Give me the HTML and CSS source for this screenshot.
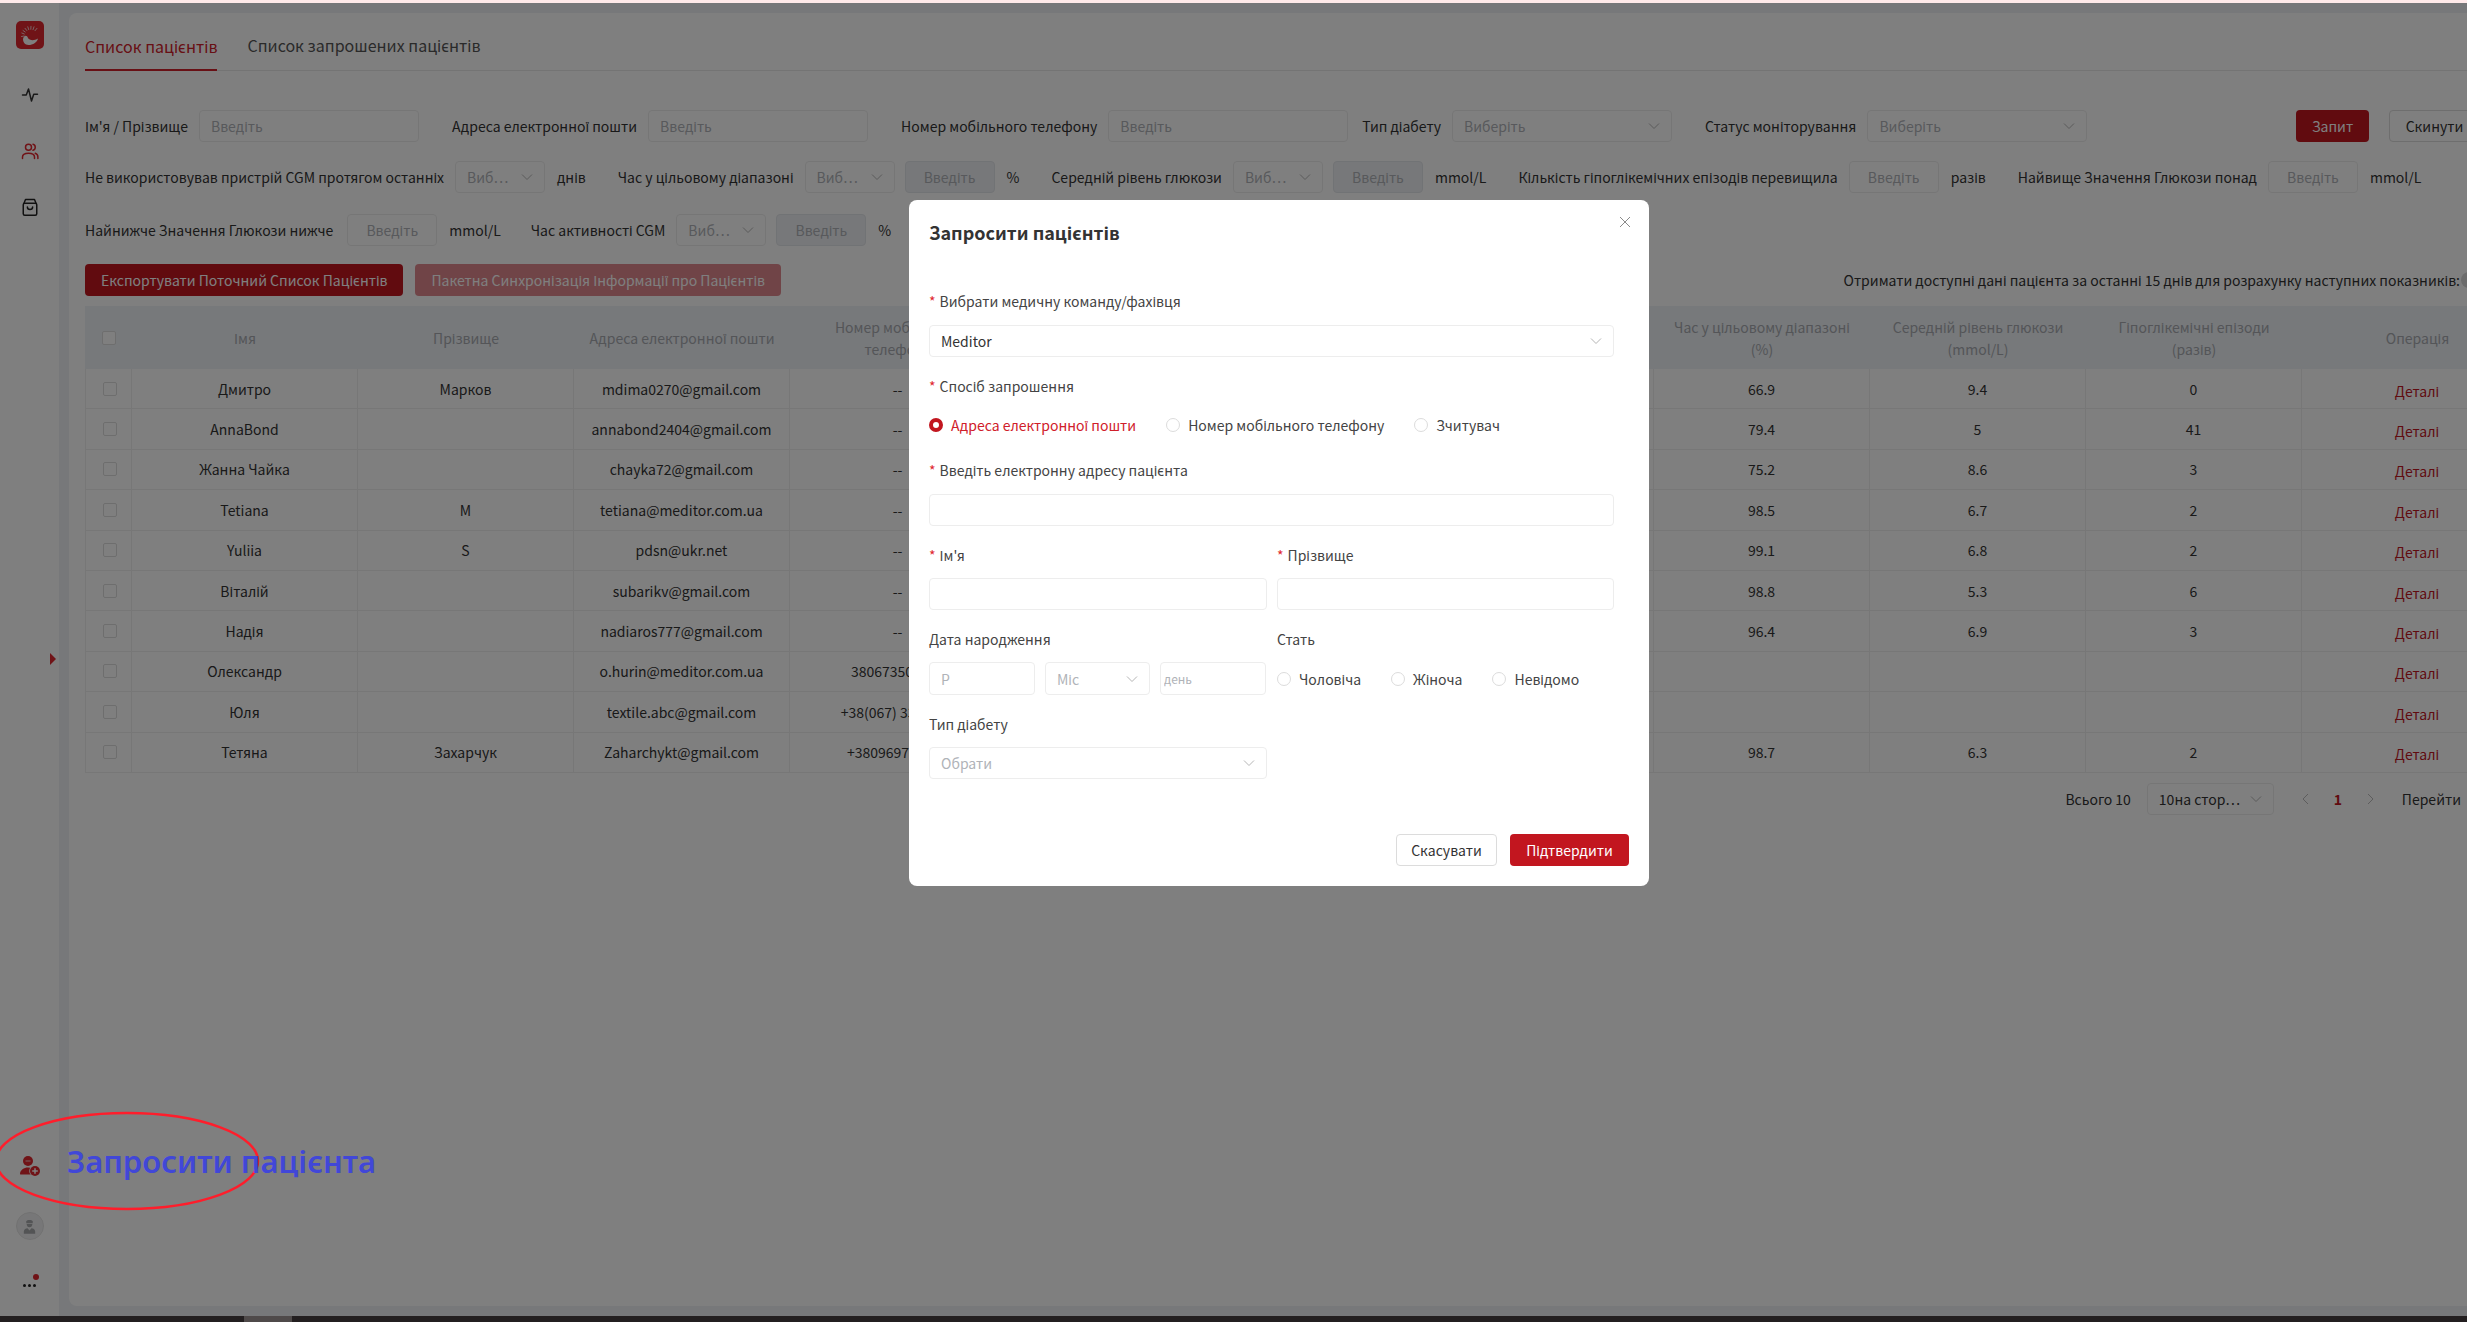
FILE: index.html
```html
<!DOCTYPE html>
<html lang="uk">
<head>
    <meta charset="UTF-8">
    <title>Список пацієнтів</title>
    <link rel="stylesheet" href="styles.css">
</head>
<body>
    <svg class="defs" width="0" height="0">
        <symbol id="chev" viewBox="0 0 12 12"><polyline points="1,3.5 6,8.5 11,3.5" fill="none" stroke="currentColor" stroke-width="1"/></symbol>
    </svg>

    <div class="topline"></div>

    <div class="app">
        <!-- left menu -->
        <div class="sidebar">
            <svg class="logo" viewBox="0 0 28 28">
                <rect width="28" height="28" rx="5" fill="#e0262e"/>
                <g stroke="#f3c9cb" stroke-width="1" stroke-linecap="round">
                    <line x1="8" y1="15" x2="5.500" y2="15.500"/>
                    <line x1="8.300" y1="13" x2="5.800" y2="12"/>
                    <line x1="9.200" y1="11" x2="7" y2="9.500"/>
                    <line x1="10.800" y1="9.500" x2="9" y2="7.300"/>
                    <line x1="12.700" y1="8.600" x2="11.800" y2="5.800"/>
                    <line x1="14.800" y1="8.300" x2="15" y2="5.300"/>
                    <line x1="17" y1="8.700" x2="18" y2="5.800"/>
                    <line x1="19" y1="9.700" x2="21" y2="7.300"/>
                </g>
                <path d="M7 18C8 14 11 14 12 17c1.500 2.500 6 3 10 .5C21 21.500 17 24 12.500 24 9 24 7 21 7 18z" fill="#fff"/>
            </svg>
            <svg class="nav-icon nav-first" viewBox="0 0 24 24" fill="none" stroke="#333" stroke-width="2" stroke-linejoin="round" stroke-linecap="round"><polyline points="2,12 7,12 10,4 14,20 17,11 22,11"/></svg>
            <svg class="nav-icon" viewBox="0 0 24 24" fill="none" stroke="#e0262e" stroke-width="2" stroke-linecap="round"><circle cx="10" cy="7" r="4"/><path d="M2 22v-2c0-3 3-5 8-5s8 2 8 5v2"/><path d="M16 3c2 .5 3 2 3 4s-1 3.500-3 4"/><path d="M19 15c2 .8 3.500 2.300 3.500 4.500V22"/></svg>
            <svg class="nav-icon" viewBox="0 0 24 24" fill="none" stroke="#222" stroke-width="2" stroke-linejoin="round" stroke-linecap="round"><path d="M4 7l2-5h12l2 5"/><rect x="3" y="7" width="18" height="16" rx="2"/><path d="M8.500 12c0 4.500 7 4.500 7 0"/></svg>
            <div class="side-handle"></div>

            <div class="side-bottom">
                <svg class="invite-icon" viewBox="0 0 20 20">
                    <circle cx="8" cy="5" r="5" fill="#e0262e"/>
                    <rect x="5.500" y="4.500" width="5" height="1" fill="#fff" opacity=".7"/>
                    <path d="M0 18c0-4 4-6.500 8-6.500 3 0 5 1 6 2v5H1.500C.5 18.500 0 18.500 0 18z" fill="#e0262e"/>
                    <circle cx="15" cy="15" r="5.800" fill="#fff"/>
                    <circle cx="15" cy="15" r="5" fill="#e0262e"/>
                    <path d="M15 12.200v5.600M12.200 15h5.600" stroke="#fff" stroke-width="1.500"/>
                </svg>
                <div class="avatar">
                    <svg viewBox="0 0 16 18" width="13" height="15" fill="#a6a8ab">
                        <path d="M4 2.500C5 .5 11 .5 12 2.500V5H4z"/>
                        <path d="M4.500 6h7c0 2.500-1.500 4-3.500 4S4.500 8.500 4.500 6z"/>
                        <path d="M1 18v-3c0-2.500 2.500-4 4.500-4L8 14l2.500-3c2 0 4.500 1.500 4.500 4v3z"/>
                    </svg>
                </div>
                <div class="more">
                    <span class="more-dot"></span>
                    <i></i><i></i><i></i>
                </div>
            </div>
        </div>

        <div class="main">
            <div class="card">
                <div class="tabs">
                    <div class="tab tab-on">Список пацієнтів</div>
                    <div class="tab">Список запрошених пацієнтів</div>
                </div>

                <div class="content">
                    <div class="filter-row row-1">
                        <label class="fl">Ім'я / Прізвище</label>
                        <input class="inp w220" placeholder="Введіть">
                        <label class="fl">Адреса електронної пошти</label>
                        <input class="inp w220" placeholder="Введіть">
                        <label class="fl">Номер мобільного телефону</label>
                        <input class="inp w240" placeholder="Введіть">
                        <label class="fl fl-type">Тип діабету</label>
                        <div class="sel w220"><span>Виберіть</span><svg class="chev"><use href="#chev"/></svg></div>
                        <label class="fl">Статус моніторування</label>
                        <div class="sel w220"><span>Виберіть</span><svg class="chev"><use href="#chev"/></svg></div>
                        <div class="row-btns">
                            <button class="btn btn-red btn-query">Запит</button>
                            <button class="btn btn-plain btn-reset">Скинути</button>
                        </div>
                    </div>

                    <div class="filter-row row-2">
                        <label class="fl">Не використовував пристрій CGM протягом останніх</label>
                        <div class="sel w90"><span>Виб⋯</span><svg class="chev"><use href="#chev"/></svg></div>
                        <span class="unit">днів</span>
                        <label class="fl">Час у цільовому діапазоні</label>
                        <div class="sel w90"><span>Виб⋯</span><svg class="chev"><use href="#chev"/></svg></div>
                        <input class="inp w90 num off" placeholder="Введіть">
                        <span class="unit">%</span>
                        <label class="fl">Середній рівень глюкози</label>
                        <div class="sel w90"><span>Виб⋯</span><svg class="chev"><use href="#chev"/></svg></div>
                        <input class="inp w90 num off" placeholder="Введіть">
                        <span class="unit">mmol/L</span>
                        <label class="fl">Кількість гіпоглікемічних епізодів перевищила</label>
                        <input class="inp w90 num" placeholder="Введіть">
                        <span class="unit">разів</span>
                        <label class="fl">Найвище Значення Глюкози понад</label>
                        <input class="inp w90 num" placeholder="Введіть">
                        <span class="unit">mmol/L</span>
                    </div>

                    <div class="filter-row row-3">
                        <label class="fl">Найнижче Значення Глюкози нижче</label>
                        <input class="inp w90 num" placeholder="Введіть">
                        <span class="unit">mmol/L</span>
                        <label class="fl">Час активності CGM</label>
                        <div class="sel w90"><span>Виб⋯</span><svg class="chev"><use href="#chev"/></svg></div>
                        <input class="inp w90 num off" placeholder="Введіть">
                        <span class="unit">%</span>
                    </div>

                    <div class="toolbar">
                        <div class="toolbar-btns">
                            <button class="btn btn-red">Експортувати Поточний Список Пацієнтів</button>
                            <button class="btn btn-red btn-off">Пакетна Синхронізація Інформації про Пацієнтів</button>
                        </div>
                        <div class="hint">Отримати доступні дані пацієнта за останні 15 днів для розрахунку наступних показників:<span class="hint-q"></span></div>
                    </div>

                    <table class="patients">
                        <colgroup>
                            <col class="c-check"><col class="c-name"><col class="c-std"><col class="c-std"><col class="c-std"><col class="c-std"><col class="c-std"><col class="c-std"><col class="c-std"><col class="c-std"><col class="c-std"><col class="c-op">
                        </colgroup>
                        <thead>
                            <tr>
                                <th><span class="cb"></span></th>
                                <th>Імя</th>
                                <th>Прізвище</th>
                                <th>Адреса електронної пошти</th>
                                <th>Номер мобільного<br>телефону</th>
                                <th></th>
                                <th></th>
                                <th></th>
                                <th>Час у цільовому діапазоні<br>(%)</th>
                                <th>Середній рівень глюкози<br>(mmol/L)</th>
                                <th>Гіпоглікемічні епізоди<br>(разів)</th>
                                <th>Операція</th>
                            </tr>
                        </thead>
                        <tbody>
                            <tr><td><span class="cb"></span></td><td>Дмитро</td><td>Марков</td><td>mdima0270@gmail.com</td><td>--</td><td></td><td></td><td></td><td>66.9</td><td>9.4</td><td>0</td><td><a class="link">Деталі</a></td></tr>
                            <tr><td><span class="cb"></span></td><td>AnnaBond</td><td></td><td>annabond2404@gmail.com</td><td>--</td><td></td><td></td><td></td><td>79.4</td><td>5</td><td>41</td><td><a class="link">Деталі</a></td></tr>
                            <tr><td><span class="cb"></span></td><td>Жанна Чайка</td><td></td><td>chayka72@gmail.com</td><td>--</td><td></td><td></td><td></td><td>75.2</td><td>8.6</td><td>3</td><td><a class="link">Деталі</a></td></tr>
                            <tr><td><span class="cb"></span></td><td>Tetiana</td><td>M</td><td>tetiana@meditor.com.ua</td><td>--</td><td></td><td></td><td></td><td>98.5</td><td>6.7</td><td>2</td><td><a class="link">Деталі</a></td></tr>
                            <tr><td><span class="cb"></span></td><td>Yuliia</td><td>S</td><td>pdsn@ukr.net</td><td>--</td><td></td><td></td><td></td><td>99.1</td><td>6.8</td><td>2</td><td><a class="link">Деталі</a></td></tr>
                            <tr><td><span class="cb"></span></td><td>Віталій</td><td></td><td>subarikv@gmail.com</td><td>--</td><td></td><td></td><td></td><td>98.8</td><td>5.3</td><td>6</td><td><a class="link">Деталі</a></td></tr>
                            <tr><td><span class="cb"></span></td><td>Надія</td><td></td><td>nadiaros777@gmail.com</td><td>--</td><td></td><td></td><td></td><td>96.4</td><td>6.9</td><td>3</td><td><a class="link">Деталі</a></td></tr>
                            <tr><td><span class="cb"></span></td><td>Олександр</td><td></td><td>o.hurin@meditor.com.ua</td><td>380673500000</td><td></td><td></td><td></td><td></td><td></td><td></td><td><a class="link">Деталі</a></td></tr>
                            <tr><td><span class="cb"></span></td><td>Юля</td><td></td><td>textile.abc@gmail.com</td><td>+38(067) 3300000</td><td></td><td></td><td></td><td></td><td></td><td></td><td><a class="link">Деталі</a></td></tr>
                            <tr><td><span class="cb"></span></td><td>Тетяна</td><td>Захарчук</td><td>Zaharchykt@gmail.com</td><td>+380969700000</td><td></td><td></td><td></td><td>98.7</td><td>6.3</td><td>2</td><td><a class="link">Деталі</a></td></tr>
                        </tbody>
                    </table>

                    <div class="pager">
                        <span class="pager-total">Всього 10</span>
                        <div class="sel pager-size"><span>10на стор⋯</span><svg class="chev"><use href="#chev"/></svg></div>
                        <svg class="pager-arrow" viewBox="0 0 12 12"><polyline points="8,1 3,6 8,11" fill="none" stroke="#bbb" stroke-width="1"/></svg>
                        <span class="pager-num">1</span>
                        <svg class="pager-arrow" viewBox="0 0 12 12"><polyline points="4,1 9,6 4,11" fill="none" stroke="#bbb" stroke-width="1"/></svg>
                        <span class="pager-jump">Перейти</span>
                    </div>
                </div>
            </div>
        </div>

        <div class="mask"></div>

        <!-- invite dialog -->
        <div class="modal">
            <svg class="modal-close" viewBox="0 0 12 12"><path d="M1 1l10 10M11 1L1 11" stroke="#8a8a8a" stroke-width="1" fill="none"/></svg>
            <div class="modal-title">Запросити пацієнтів</div>

            <div class="form">
                <div class="flabel"><em>*</em>Вибрати медичну команду/фахівця</div>
                <div class="sel fsel"><span class="dark">Meditor</span><svg class="chev"><use href="#chev"/></svg></div>

                <div class="flabel flabel-2"><em>*</em>Спосіб запрошення</div>
                <div class="radios radios-way">
                    <span class="radio radio-on"><i></i>Адреса електронної пошти</span>
                    <span class="radio"><i></i>Номер мобільного телефону</span>
                    <span class="radio"><i></i>Зчитувач</span>
                </div>

                <div class="flabel flabel-3"><em>*</em>Введіть електронну адресу пацієнта</div>
                <input class="inp finp">

                <div class="fgrid">
                    <div>
                        <div class="flabel"><em>*</em>Ім'я</div>
                        <input class="inp finp">
                    </div>
                    <div>
                        <div class="flabel"><em>*</em>Прізвище</div>
                        <input class="inp finp">
                    </div>
                    <div>
                        <div class="flabel">Дата народження</div>
                        <div class="date">
                            <input class="inp date-y" placeholder="Р">
                            <div class="sel date-m"><span>Міс</span><svg class="chev"><use href="#chev"/></svg></div>
                            <input class="inp date-d" placeholder="день">
                        </div>
                    </div>
                    <div>
                        <div class="flabel">Стать</div>
                        <div class="radios radios-sex">
                            <span class="radio"><i></i>Чоловіча</span>
                            <span class="radio"><i></i>Жіноча</span>
                            <span class="radio"><i></i>Невідомо</span>
                        </div>
                    </div>
                    <div>
                        <div class="flabel">Тип діабету</div>
                        <div class="sel fsel"><span>Обрати</span><svg class="chev"><use href="#chev"/></svg></div>
                    </div>
                </div>
            </div>

            <div class="modal-foot">
                <button class="btn btn-plain btn-cancel">Скасувати</button>
                <button class="btn btn-red btn-ok">Підтвердити</button>
            </div>
        </div>
    </div>

    <div class="scrollbar"><div class="scroll-thumb"></div></div>

    <!-- hand drawn note on top of the screenshot -->
    <svg class="note-ring" viewBox="0 0 270 104"><ellipse cx="127" cy="52" rx="131" ry="48" fill="none" stroke="#ff1d2b" stroke-width="2.500"/></svg>
    <div class="note-text">Запросити пацієнта</div>
</body>
</html>
```

FILE: styles.css
```css
* {
    margin: 0;
    padding: 0;
    box-sizing: border-box;
}
html, body {
    width: 2467px;
    height: 1322px;
    overflow: hidden;
}
body {
    position: relative;
    font-family: "Noto Sans CJK SC", "Noto Sans", sans-serif;
    font-size: 14px;
    line-height: 22px;
    color: #333;
    background: #fff;
}
.defs {
    position: absolute;
}
.topline {
    height: 3px;
    background: #ffeaea;
}
.app {
    position: relative;
    display: flex;
    height: 1313px;
    overflow: hidden;
}
.scrollbar {
    height: 6px;
    background: #231f20;
}
.scroll-thumb {
    width: 48px;
    height: 6px;
    margin-left: 244px;
    background: #4f4a4a;
}

/* sidebar */
.sidebar {
    position: relative;
    flex: none;
    width: 59px;
    display: flex;
    flex-direction: column;
    align-items: center;
    background: #fff;
    padding-top: 18px;
}
.logo {
    width: 28px;
    height: 28px;
}
.nav-icon {
    width: 18px;
    height: 18px;
    margin-bottom: 38px;
}
.nav-first {
    margin-top: 37px;
}
.side-handle {
    position: absolute;
    left: 50px;
    top: 650px;
    width: 0;
    height: 0;
    border-left: 6px solid #e0262e;
    border-top: 6px solid transparent;
    border-bottom: 6px solid transparent;
}
.side-bottom {
    margin-top: auto;
    display: flex;
    flex-direction: column;
    align-items: center;
    padding-bottom: 28px;
}
.invite-icon {
    width: 20px;
    height: 20px;
}
.avatar {
    width: 28px;
    height: 28px;
    margin-top: 36px;
    border-radius: 50%;
    background: #efeff0;
    border: 1px solid #e4e4e4;
    display: flex;
    align-items: center;
    justify-content: center;
}
.more {
    position: relative;
    display: flex;
    gap: 2px;
    margin-top: 44px;
    height: 4px;
}
.more i {
    width: 3px;
    height: 3px;
    border-radius: 50%;
    background: #222;
}
.more-dot {
    position: absolute;
    right: -3px;
    top: -10px;
    width: 6px;
    height: 6px;
    border-radius: 50%;
    background: #e0262e;
}

/* main card */
.main {
    flex: 1;
    min-width: 0;
    background: #eef1f5;
    padding: 10px 0 10px 10px;
}
.card {
    height: 100%;
    background: #fff;
    border-radius: 8px 0 0 8px;
    padding-left: 16px;
}
.tabs {
    display: flex;
    gap: 30px;
    height: 58px;
    align-items: flex-end;
    border-bottom: 1px solid #e8e8e8;
}
.tab {
    font-size: 16px;
    line-height: 24px;
    padding-bottom: 13px;
    color: #555;
}
.tab-on {
    color: #d0202a;
    padding-bottom: 11px;
    border-bottom: 2px solid #d0202a;
    margin-bottom: -1px;
}
.content {
    width: 2395px;
}

/* filters */
.filter-row {
    display: flex;
    align-items: center;
    height: 32px;
    white-space: nowrap;
}
.row-1 { margin-top: 39px; }
.row-2 { margin-top: 19px; }
.row-3 { margin-top: 21px; }
.fl {
    margin-right: 11px;
}
.inp, .sel {
    height: 32px;
    background: #fff;
    border: 1px solid #ededed;
    border-radius: 4px;
    font-family: inherit;
    font-size: 14px;
    color: #b0b3b8;
}
.inp {
    padding: 0 11px;
    outline: none;
}
.inp::placeholder {
    color: #b0b3b8;
    opacity: 1;
}
.sel {
    display: flex;
    align-items: center;
    justify-content: space-between;
    padding: 0 11px;
}
.chev {
    flex: none;
    width: 12px;
    height: 12px;
    color: #b5b5b5;
}
.w220 { width: 220px; }
.w240 { width: 240px; }
.w90 { width: 90px; }
.num {
    text-align: center;
}
.off {
    background: #eef1f5;
    border-color: #e3e6ea;
    margin-left: 10px;
}
.fl ~ .fl {
    margin-left: 32px;
}
.row-1 .fl ~ .fl {
    margin-left: 33px;
}
.row-1 .fl ~ .fl-type {
    margin-left: 14px;
}
.row-3 .fl:first-child {
    margin-right: 14px;
}
.row-3 .fl ~ .fl {
    margin-left: 30px;
}
.unit {
    margin-left: 12px;
}
.row-btns {
    display: flex;
    gap: 20px;
    margin-left: auto;
}

/* buttons */
.btn {
    height: 32px;
    padding: 0 15px;
    border-radius: 4px;
    border: 1px solid transparent;
    font-family: inherit;
    font-size: 14px;
}
.btn-red {
    background: #c2161f;
    color: #fff;
}
.btn-off {
    opacity: .5;
}
.btn-plain {
    background: #fff;
    border-color: #dcdcdc;
    color: #333;
}
.btn-query {
    width: 73px;
    padding: 0;
}
.btn-reset {
    width: 91px;
}
.toolbar {
    display: flex;
    justify-content: space-between;
    align-items: center;
    margin-top: 18px;
}
.toolbar-btns {
    display: flex;
    gap: 12px;
}
.hint {
    display: flex;
    align-items: center;
    gap: 1px;
    padding-right: 3px;
}
.hint-q {
    flex: none;
    width: 16px;
    height: 16px;
    border-radius: 50%;
    background: #d8d8d8;
}

/* table */
.patients {
    width: 2448px;
    margin-top: 10px;
    table-layout: fixed;
    border-collapse: separate;
    border-spacing: 0;
    text-align: center;
}
.c-check { width: 47px; }
.c-name { width: 226px; }
.c-std { width: 216px; }
.c-op { width: 231px; }
.patients th {
    height: 63px;
    font-weight: 400;
    color: #a8abb0;
    background: #eef2f7;
}
.patients td {
    height: 40.4px;
    border-bottom: 1px solid #eee;
    border-right: 1px solid #eee;
}
.patients td:first-child {
    border-left: 1px solid #eee;
}
.cb {
    display: block;
    width: 14px;
    height: 14px;
    margin-left: 17px;
    background: #fff;
    border: 1px solid #dcdcdc;
    border-radius: 2px;
}
.link {
    display: inline-block;
    padding-top: 4px;
    color: #c2161f;
}

/* pagination */
.pager {
    display: flex;
    align-items: center;
    justify-content: flex-end;
    margin-top: 10px;
    padding-right: 19px;
}
.pager-size {
    width: 127px;
    margin: 0 26px 0 16px;
    color: #333;
}
.pager-arrow {
    width: 12px;
    height: 12px;
}
.pager-num {
    width: 52px;
    text-align: center;
    font-weight: 700;
    color: #c2161f;
}
.pager-jump {
    margin-left: 26px;
}

/* overlay and dialog */
.mask {
    position: absolute;
    inset: 0;
    background: rgba(0, 0, 0, .5);
}
.modal {
    position: absolute;
    left: 909px;
    top: 197px;
    width: 740px;
    height: 686px;
    padding: 0 20px;
    background: #fff;
    border-radius: 8px;
    display: flex;
    flex-direction: column;
}
.modal-close {
    position: absolute;
    right: 18px;
    top: 16px;
    width: 12px;
    height: 12px;
}
.modal-title {
    margin-top: 19px;
    font-size: 18px;
    line-height: 26px;
    font-weight: 700;
    color: #333;
}
.form {
    width: 685px;
    margin-top: 45px;
}
.flabel {
    height: 22px;
    color: #444;
    margin-bottom: 13px;
}
.flabel em {
    color: #e0262e;
    font-style: normal;
    margin-right: 4px;
}
.dark {
    color: #333;
}
.fsel {
    width: 100%;
}
.finp {
    display: block;
    width: 100%;
}
.flabel-2 {
    margin-top: 18px;
    margin-bottom: 17px;
}
.flabel-3 {
    margin-top: 23px;
    margin-bottom: 13px;
}
.radios {
    display: flex;
    align-items: center;
    height: 22px;
    color: #444;
}
.radio {
    display: flex;
    align-items: center;
    gap: 8px;
}
.radio i {
    flex: none;
    width: 14px;
    height: 14px;
    border: 1px solid #dcdcdc;
    border-radius: 50%;
    background: #fff;
}
.radio-on {
    color: #d0202a;
}
.radio-on i {
    border: 4px solid #c2161f;
}
.radios-way {
    gap: 30px;
}
.radios-sex {
    height: 33px;
    gap: 30px;
}
.fgrid {
    display: grid;
    grid-template-columns: 338px 337px;
    column-gap: 10px;
    row-gap: 18px;
    margin-top: 18px;
}
.fgrid .flabel {
    margin-bottom: 12px;
}
.date {
    display: grid;
    grid-template-columns: 106px 105px 106px;
    column-gap: 10px;
}
.date .inp, .date .sel {
    height: 33px;
    width: 100%;
}
.date-d {
    padding: 0 3px;
    font-size: 12px;
}
.date-d::placeholder {
    font-size: 12px;
}
.modal-foot {
    display: flex;
    justify-content: flex-end;
    gap: 13px;
    margin-top: auto;
    margin-bottom: 20px;
}
.btn-cancel {
    width: 101px;
    padding: 0;
}
.btn-ok {
    width: 119px;
    padding: 0;
}

/* annotation */
.note-ring {
    position: absolute;
    left: 0;
    top: 1109px;
    width: 270px;
    height: 104px;
}
.note-text {
    position: absolute;
    left: 67px;
    top: 1139px;
    font-family: "Noto Sans", sans-serif;
    font-size: 31px;
    line-height: 44px;
    font-weight: 600;
    color: #4147d8;
    white-space: nowrap;
}
```
